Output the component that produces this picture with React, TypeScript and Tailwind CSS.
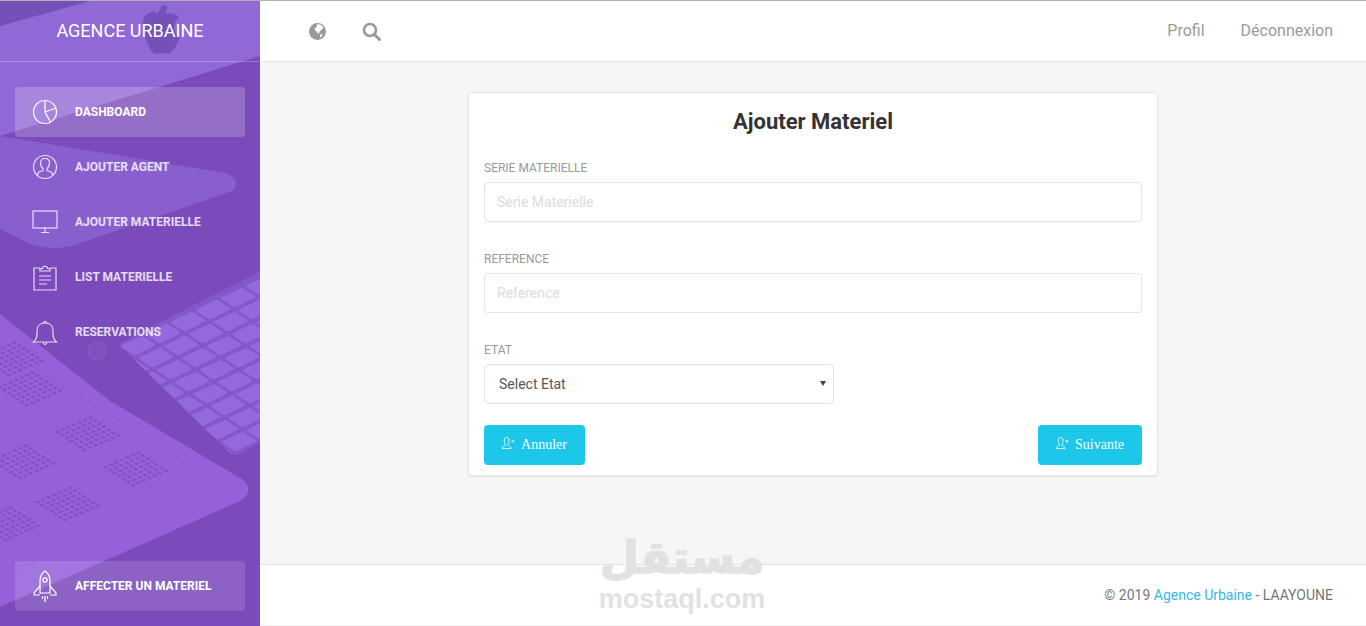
import React from "react";

const navItems = [
  { label: "Dashboard", icon: "pie", active: true },
  { label: "Ajouter Agent", icon: "user" },
  { label: "Ajouter Materielle", icon: "monitor" },
  { label: "List Materielle", icon: "clipboard" },
  { label: "Reservations", icon: "bell" },
];

const NavIcon = ({ name }: { name: string }) => {
  const common = { fill: "none", stroke: "currentColor", strokeWidth: 1.2 };
  return (
    <svg width="28" height="28" viewBox="0 0 28 28" {...common}>
      {name === "pie" && (
        <>
          <circle cx="14" cy="14" r="11.5" />
          <path d="M14 2.5V14l5.5 10M14 14l11-4" />
        </>
      )}
      {name === "user" && (
        <>
          <circle cx="14" cy="14" r="11.5" />
          <path d="M6.5 22.5v-1c0-1.500 1-2.500 3-3l2.500-1v-2c-1.500-1-2.500-3-2.500-5.500 0-3 2-4.500 4.500-4.500s4.500 1.500 4.500 4.500c0 2.500-1 4.500-2.500 5.500v2l2.500 1c2 .5 3 1.500 3 3v1" />
        </>
      )}
      {name === "monitor" && (
        <>
          <rect x="2" y="3" width="24" height="17" />
          <path d="M14 20v4M10 24.500h8" />
        </>
      )}
      {name === "clipboard" && (
        <>
          <path d="M9 5H3v22h22V5h-6" />
          <path d="M9 8V5.500h2.500c0-3 5-3 5 0H19V8zM8 13h12M8 17h12M8 21h8" />
        </>
      )}
      {name === "bell" && (
        <>
          <path d="M2.500 24c2.500-2 3.500-4 3.500-8v-3c0-5 3-8 8-8s8 3 8 8v3c0 4 1 6 3.500 8z" />
          <path d="M12.500 5c0-2 3-2 3 0M12 24.500c.5 2.500 3.500 2.500 4 0" />
        </>
      )}
    </svg>
  );
};

const RocketIcon = () => (
  <svg width="28" height="32" viewBox="0 0 28 32" fill="none" stroke="currentColor" strokeWidth="1.2">
    <path d="M14 1c-3 2-5 6-5 10v12h10V11c0-4-2-8-5-10z" />
    <circle cx="14" cy="10" r="2.200" />
    <path d="M9 16l-6 7v2h6M19 16l6 7v2h-6M11.500 26v3M14 26v6M16.500 26v3" />
  </svg>
);

const SmallUser = ({ mark }: { mark: string }) => (
  <svg className="-translate-y-0.5" width="13" height="12" viewBox="0 0 14 13" fill="none" stroke="currentColor" strokeWidth="0.9">
    <path d="M.5 12.500v-1c0-1 2.500-1.500 3-2.500V7.500C2.500 6.500 2.500 5 2.500 3.500 2.500 1.500 3.500.5 5 .5s2.500 1 2.500 3c0 1.500 0 3-1 4V9c.5 1 3 1.500 3 2.500v1z" />
    {mark === "plus" ? <path d="M10 4.500h3.500M11.750 2.750v3.500" /> : <path d="M10.500 3.500l2.500 2.500M13 3.500L10.500 6" />}
  </svg>
);

// calendar date blocks printed on the tablet
const dotGroups = [
  [14, 358],
  [32, 388],
  [90, 433],
  [138, 468],
  [70, 503],
  [25, 461],
  [10, 523],
];

const SidebarArt = () => (
  <svg className="absolute inset-0" width="260" height="626" viewBox="0 0 260 626">
    <defs>
      <clipPath id="kb">
        <path d="M260 270L118 343L232 454Q240 456 260 440z" />
      </clipPath>
    </defs>
    <rect width="260" height="626" fill="#7b4abb" />
    <path d="M0 0H260V55L0 135z" fill="#9169d6" />
    <path d="M0 0H90L0 25z" fill="#7450b8" />
    <path d="M162 4c-1 3-3 5-4 8-7-3-15 1-15 11 0 12 8 30 13 30 3 0 4-1 6-1s3 1 6 1c4 0 10-10 12-17-7-3-8-15-1-19-3-4-8-6-13-4 0-3 1-6 2-8z" fill="#7450b8" />
    <path d="M0 135L225 172Q243 178 232 190L72 245Q50 250 30 243L0 228z" fill="#895fcd" />
    <path d="M260 270L118 343L232 454Q240 456 260 440z" fill="#8458c8" />
    <g clipPath="url(#kb)">
      <g transform="matrix(25 -12 18 12 120 345)">
        {Array.from({ length: 9 }).flatMap((_, i) =>
          Array.from({ length: 9 }).map((_, j) => (
            <rect key={`${i}-${j}`} x={i - 2} y={j} width="0.88" height="0.8" rx="0.1" fill="#9469dc" />
          ))
        )}
      </g>
    </g>
    <circle cx="97" cy="350" r="9" fill="#7f52bf" stroke="#8458c8" strokeWidth="1.500" />
    <path d="M0 313L110 400L242 478Q256 490 240 500L0 606z" fill="#9560d9" />
    <path d="M0 345L215 481L0 575" fill="none" stroke="#8d5bd0" strokeWidth="1" />
    <g fill="#8152c4">
      {dotGroups.map(([x, y], gi) => (
        <g key={gi} transform={`matrix(5.5 -2.4 4.5 3 ${x} ${y})`}>
          {Array.from({ length: 7 }).flatMap((_, r) =>
            Array.from({ length: 7 }).map((_, c) => (
              <rect key={`${r}-${c}`} x={c - 3.5} y={r - 3.5} width="0.55" height="0.55" />
            ))
          )}
        </g>
      ))}
    </g>
  </svg>
);

const Field = ({ label, placeholder }: { label: string; placeholder: string }) => (
  <div className="mb-[26px]">
    <label className="mb-[2px] block text-xs leading-[23px] text-[#9a9a9a] uppercase">{label}</label>
    <input
      placeholder={placeholder}
      className="h-10 w-full rounded border border-[#e3e3e3] bg-white px-3 text-sm text-[#565656] outline-none placeholder:text-[#e0dae0]"
    />
  </div>
);

export default function App() {
  return (
    <div className="flex h-[626px] overflow-hidden border-t border-[#b0b0b0] font-['Roboto',sans-serif]">
      {/* sidebar */}
      <aside className="relative flex w-[260px] shrink-0 flex-col text-white">
        <SidebarArt />
        <div className="relative flex h-[61px] items-center justify-center border-b border-white/25 text-lg">
          AGENCE URBAINE
        </div>
        <nav className="relative mt-[25px] flex flex-col gap-[5px] px-[15px]">
          {navItems.map((item) => (
            <a
              key={item.label}
              className={`flex h-[50px] items-center gap-4 rounded pl-4 text-xs font-bold uppercase ${
                item.active ? "bg-white/20 text-white" : "text-white/80"
              }`}
            >
              <NavIcon name={item.icon} />
              {item.label}
            </a>
          ))}
        </nav>
        <div className="relative mt-auto mb-[15px] px-[15px]">
          <a className="flex h-[50px] items-center gap-4 rounded bg-white/13 pl-4 text-xs font-bold text-white uppercase">
            <RocketIcon />
            Affecter un materiel
          </a>
        </div>
      </aside>

      {/* main column */}
      <div className="relative flex min-w-0 flex-1 flex-col bg-[#f6f6f6]">
        <header className="box-content flex h-[60px] shrink-0 items-center justify-between border-b border-[#e3e3e3] bg-white pr-[33px] pl-[49px]">
          <div className="flex items-center gap-9 text-[#9a9a9a]">
            <svg width="17" height="17" viewBox="0 0 17 17">
              <circle cx="8.500" cy="8.500" r="8.500" fill="#9a9a9a" />
              <path d="M8 1.500c2-.5 5 .5 6 2.500.5 1.500-.5 2-1.500 2.500-.5 1.500-1.500 1-2 2.500l-1 2c-1-.5-1-2-2-2.500-.5-1-2-1-2-2.500 0-1 2-1 2-2.500z" fill="#fff" />
              <path d="M11 12l2.500-1.500-.5 2.500-2 1.500z" fill="#fff" />
            </svg>
            <svg width="19" height="19" viewBox="0 0 19 19" fill="none" stroke="#9a9a9a">
              <circle cx="8" cy="8" r="6" strokeWidth="2.600" />
              <path d="M12.500 12.500l5 5" strokeWidth="3" strokeLinecap="round" />
            </svg>
          </div>
          <div className="flex items-center gap-9 text-base text-[#9a9a9a]">
            <a>Profil</a>
            <a>Déconnexion</a>
          </div>
        </header>

        <main className="flex-1 pt-[30px]">
          <div className="mx-auto h-[384px] w-[690px] rounded border border-[#e6e6e6] bg-white px-[15px] shadow-[0_1px_2px_rgba(0,0,0,0.08)]">
            <h1 className="pt-[15px] pb-[21px] text-center text-[22px] leading-[28px] font-bold text-[#333]">
              Ajouter Materiel
            </h1>
            <Field label="Serie Materielle" placeholder="Serie Materielle" />
            <Field label="Reference" placeholder="Reference" />
            <label className="mb-[2px] block text-xs leading-[23px] text-[#9a9a9a] uppercase">Etat</label>
            <div className="relative w-[350px]">
              <select className="h-10 w-full appearance-none rounded border border-[#e3e3e3] bg-white px-[14px] text-sm text-[#565656] outline-none">
                <option>Select Etat</option>
              </select>
              <span className="pointer-events-none absolute top-[17px] right-[8px] h-0 w-0 border-x-[3px] border-t-[5px] border-x-transparent border-t-[#444]" />
            </div>
            <div className="mt-[21px] flex justify-between font-['Liberation_Serif',serif] text-sm text-white">
              <button className="flex h-10 w-[101px] items-center justify-center gap-[6px] rounded bg-[#1dc7ea]">
                <SmallUser mark="x" />
                Annuler
              </button>
              <button className="flex h-10 w-[104px] items-center justify-center gap-[6px] rounded bg-[#1dc7ea]">
                <SmallUser mark="plus" />
                Suivante
              </button>
            </div>
          </div>
        </main>

        <footer className="flex h-[62px] shrink-0 items-center justify-end border-y border-t-[#e3e3e3] border-b-[#f0f0f0] bg-white pr-[33px] pb-px text-sm text-[#777]">
          <span>
            © 2019 <span className="text-[#35b8e8]">Agence Urbaine</span> - LAAYOUNE
          </span>
        </footer>

        {/* watermark */}
        <div className="pointer-events-none absolute top-[529px] left-[340px] flex w-[164px] flex-col items-center text-[#e2e2e2]">
          <span className="font-['DejaVu_Sans',sans-serif] text-[45px] leading-[55px] font-bold [-webkit-text-stroke:1.5px_#e2e2e2]">مستقل</span>
          <span className="font-['Liberation_Sans',sans-serif] text-[27px] leading-[28px] font-bold">mostaql.com</span>
        </div>
      </div>
    </div>
  );
}
